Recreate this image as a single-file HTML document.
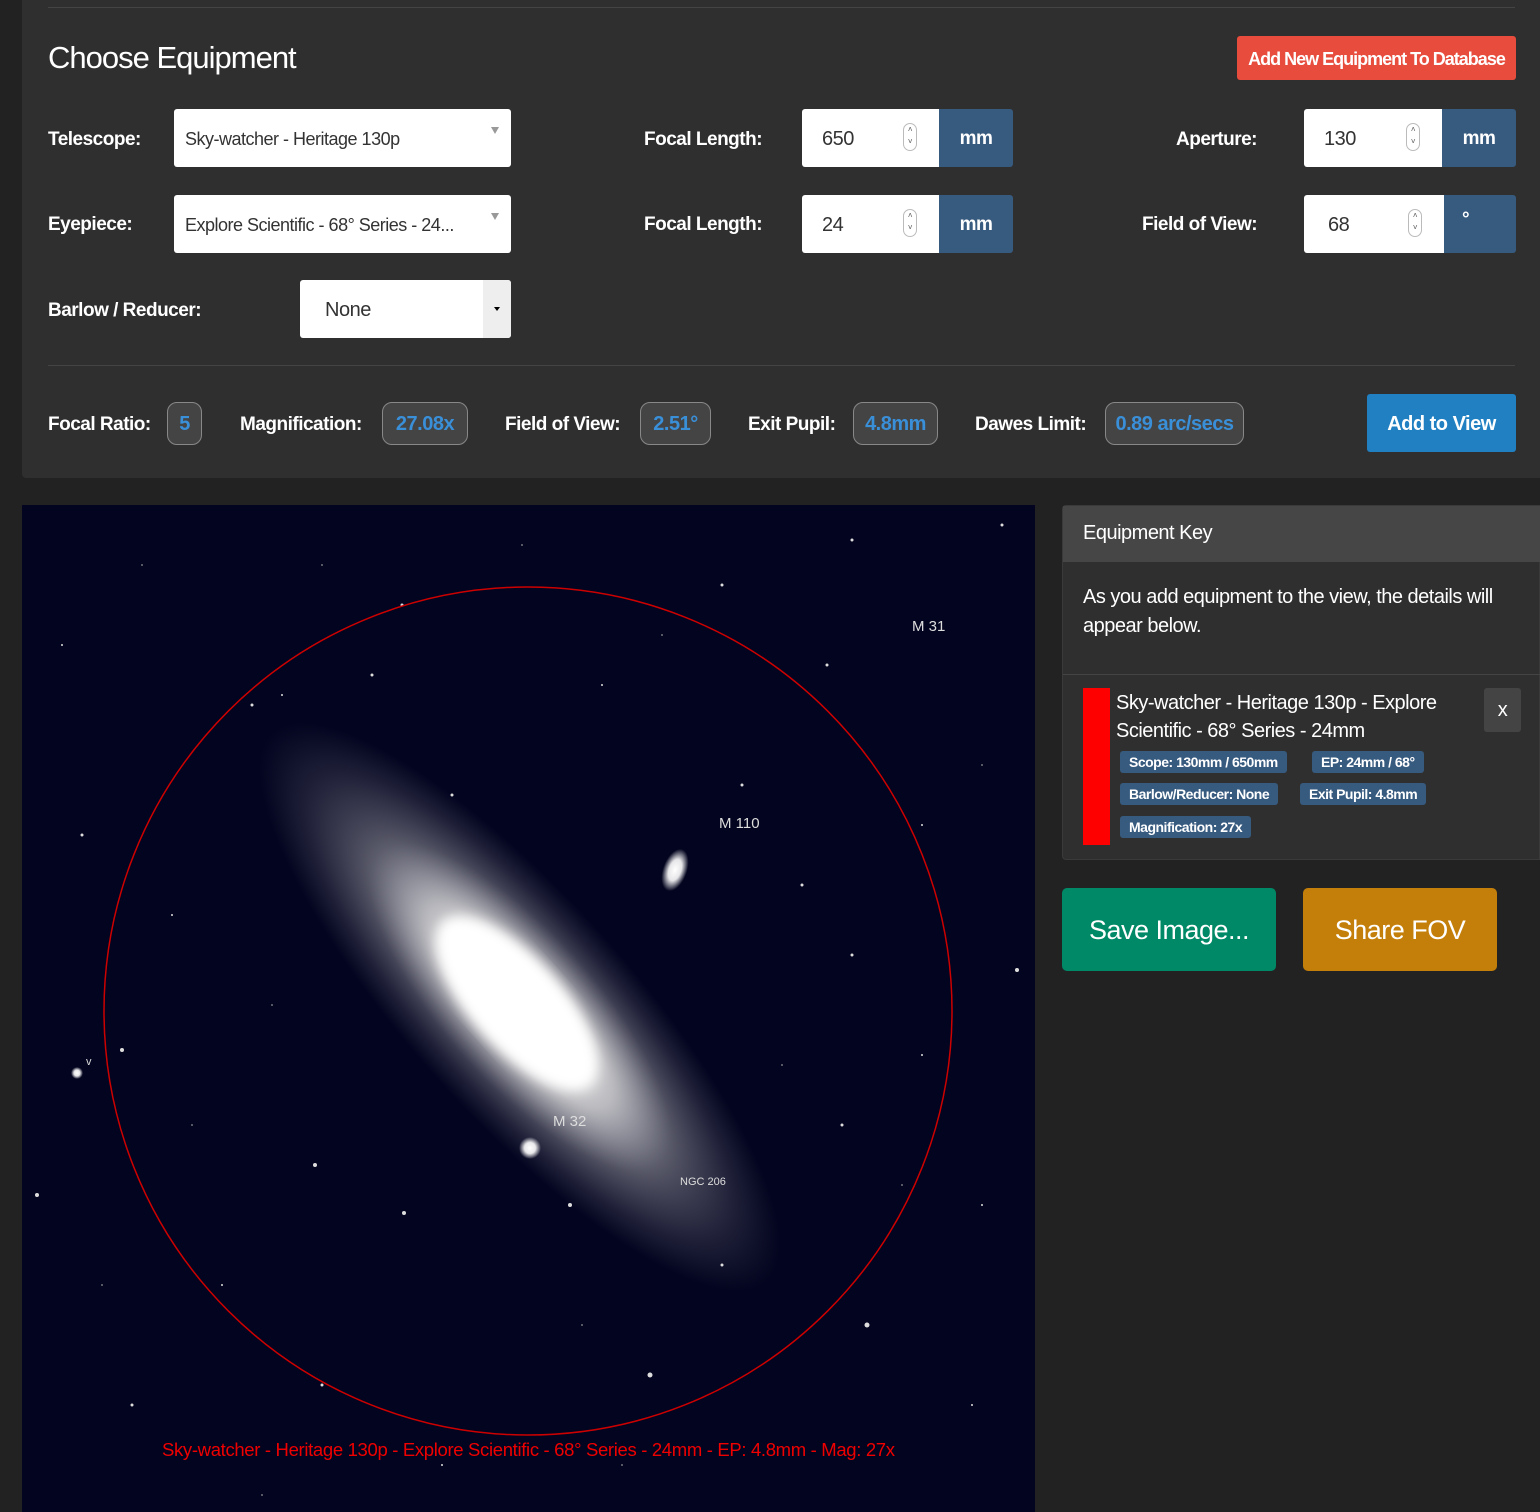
<!DOCTYPE html>
<html><head><meta charset="utf-8"><style>
*{box-sizing:border-box;margin:0;padding:0}
body{width:1540px;height:1512px;background:#222;font-family:"Liberation Sans",sans-serif;color:#fff;position:relative;overflow:hidden;letter-spacing:-0.5px}
.abs{position:absolute}
.panel{left:22px;top:0;width:1518px;height:478px;background:#2f2f2f;border-radius:0 0 0 4px}
.hr{height:1px;background:#444}
.lbl{font-weight:bold;font-size:19px;color:#fff}
.sel{background:#fff;border-radius:3px;color:#333;font-size:18px;padding-left:11px;line-height:60px;height:58px}
.arr{position:absolute;right:12px;top:18px;width:0;height:0;border-left:4px solid transparent;border-right:4px solid transparent;border-top:7px solid #999}
.num{background:#fff;border-radius:3px 0 0 3px;color:#333;font-size:20px;height:58px;line-height:60px;padding-left:20px}
.spin{position:absolute;right:22px;top:14px;width:14px;height:28px;border:1px solid #bbb;border-radius:7px;font-size:8px;line-height:12px;text-align:center;color:#555}
.unit{background:#375a7f;border-radius:0 3px 3px 0;height:58px;line-height:60px;font-weight:bold;font-size:19px;text-align:center}
.badge{border:1px solid #888;border-radius:10px;background:#444;color:#3a8fd9;font-weight:bold;font-size:20px;height:43px;line-height:43px;text-align:center}
.tag{background:#375a7f;border-radius:3px;font-weight:bold;font-size:14px;height:22px;line-height:22px;padding:0 9px;position:absolute}
</style></head><body>
<div class="abs panel"></div>
<div class="abs hr" style="left:48px;top:7px;width:1467px"></div>
<div class="abs" style="left:48px;top:40px;font-size:31px;letter-spacing:-1px">Choose Equipment</div>
<div class="abs" style="left:1237px;top:36px;width:279px;height:44px;background:#e74c3c;border-radius:3px;font-size:18px;font-weight:bold;text-align:center;line-height:46px;letter-spacing:-1px">Add New Equipment To Database</div>

<div class="abs lbl" style="left:48px;top:129px">Telescope:</div>
<div class="abs sel" style="left:174px;top:109px;width:337px">Sky-watcher - Heritage 130p<span class="arr"></span></div>
<div class="abs lbl" style="left:48px;top:214px">Eyepiece:</div>
<div class="abs sel" style="left:174px;top:195px;width:337px">Explore Scientific - 68° Series - 24...<span class="arr"></span></div>
<div class="abs lbl" style="left:48px;top:300px">Barlow / Reducer:</div>
<div class="abs sel" style="left:300px;top:280px;width:211px;padding-left:25px;font-size:20px">None<span style="position:absolute;right:0;top:0;width:28px;height:58px;background:#eee;border-radius:0 3px 3px 0"></span><span style="position:absolute;right:11px;top:27px;border-left:3px solid transparent;border-right:3px solid transparent;border-top:4px solid #000"></span></div>

<div class="abs lbl" style="left:644px;top:129px">Focal Length:</div>
<div class="abs num" style="left:802px;top:109px;width:137px">650<span class="spin">˄<br>˅</span></div>
<div class="abs unit" style="left:939px;top:109px;width:74px">mm</div>
<div class="abs lbl" style="left:644px;top:214px">Focal Length:</div>
<div class="abs num" style="left:802px;top:195px;width:137px">24<span class="spin">˄<br>˅</span></div>
<div class="abs unit" style="left:939px;top:195px;width:74px">mm</div>

<div class="abs lbl" style="left:1176px;top:129px">Aperture:</div>
<div class="abs num" style="left:1304px;top:109px;width:138px">130<span class="spin">˄<br>˅</span></div>
<div class="abs unit" style="left:1442px;top:109px;width:74px">mm</div>
<div class="abs lbl" style="left:1142px;top:214px">Field of View:</div>
<div class="abs num" style="left:1304px;top:195px;width:140px;padding-left:24px">68<span class="spin">˄<br>˅</span></div>
<div class="abs unit" style="left:1444px;top:195px;width:72px;text-align:left;padding-left:18px;line-height:50px">°</div>

<div class="abs hr" style="left:48px;top:365px;width:1467px"></div>
<div class="abs lbl" style="left:48px;top:414px">Focal Ratio:</div>
<div class="abs badge" style="left:167px;top:402px;width:35px">5</div>
<div class="abs lbl" style="left:240px;top:414px">Magnification:</div>
<div class="abs badge" style="left:382px;top:402px;width:86px">27.08x</div>
<div class="abs lbl" style="left:505px;top:414px">Field of View:</div>
<div class="abs badge" style="left:640px;top:402px;width:71px">2.51°</div>
<div class="abs lbl" style="left:748px;top:414px">Exit Pupil:</div>
<div class="abs badge" style="left:853px;top:402px;width:85px">4.8mm</div>
<div class="abs lbl" style="left:975px;top:414px">Dawes Limit:</div>
<div class="abs badge" style="left:1105px;top:402px;width:139px">0.89 arc/secs</div>
<div class="abs" style="left:1367px;top:394px;width:149px;height:58px;background:#2180c2;border-radius:3px;font-size:20px;font-weight:bold;text-align:center;line-height:60px">Add to View</div>

<svg class="abs" style="left:22px;top:505px;letter-spacing:0" width="1013" height="1007" viewBox="0 0 1013 1007">
<defs>
<radialGradient id="g1"><stop offset="0" stop-color="#fff"/><stop offset=".35" stop-color="#fff" stop-opacity=".95"/><stop offset=".6" stop-color="#ccc" stop-opacity=".55"/><stop offset="1" stop-color="#889" stop-opacity="0"/></radialGradient>
<radialGradient id="g2"><stop offset="0" stop-color="#fff"/><stop offset=".5" stop-color="#fff" stop-opacity=".9"/><stop offset="1" stop-color="#fff" stop-opacity="0"/></radialGradient>
<filter id="b"><feGaussianBlur stdDeviation="6"/></filter>
</defs>
<rect width="1013" height="1007" fill="#03041f"/>
<g transform="translate(498 502) rotate(48)">
<ellipse rx="370" ry="110" fill="url(#g1)" opacity=".7"/>
<ellipse rx="210" ry="75" fill="url(#g1)"/>
<ellipse cx="-5" rx="110" ry="45" fill="#fff" filter="url(#b)"/>
</g>
<ellipse cx="653" cy="365" rx="12" ry="22" transform="rotate(20 653 365)" fill="url(#g2)"/>
<circle cx="508" cy="643" r="11" fill="url(#g2)"/>
<circle cx="55" cy="568" r="6" fill="url(#g2)"/>
<g fill="#ddd">
<circle cx="60" cy="330" r="1.5"/><circle cx="230" cy="200" r="1.5"/><circle cx="430" cy="290" r="1.5"/><circle cx="580" cy="180" r="1"/><circle cx="780" cy="380" r="1.5"/><circle cx="820" cy="620" r="1.5"/><circle cx="830" cy="450" r="1.5"/><circle cx="15" cy="690" r="2"/><circle cx="110" cy="900" r="1.5"/><circle cx="548" cy="700" r="2"/><circle cx="382" cy="708" r="2"/><circle cx="293" cy="660" r="2"/><circle cx="628" cy="870" r="2.5"/><circle cx="845" cy="820" r="2.5"/><circle cx="805" cy="160" r="1.5"/><circle cx="830" cy="35" r="1.5"/><circle cx="350" cy="170" r="1.5"/><circle cx="700" cy="80" r="1.5"/><circle cx="980" cy="20" r="1.5"/><circle cx="995" cy="465" r="2"/><circle cx="720" cy="280" r="1.5"/><circle cx="100" cy="545" r="2"/><circle cx="300" cy="880" r="1.5"/><circle cx="900" cy="550" r="1"/><circle cx="150" cy="410" r="1"/><circle cx="380" cy="100" r="1.5"/><circle cx="260" cy="190" r="1"/><circle cx="900" cy="320" r="1"/><circle cx="960" cy="700" r="1"/><circle cx="200" cy="780" r="1"/><circle cx="700" cy="760" r="1.5"/><circle cx="40" cy="140" r="1"/><circle cx="950" cy="900" r="1"/><circle cx="420" cy="960" r="1"/></g>
<g fill="#bbb" opacity=".6">
<circle cx="120" cy="60" r="1"/><circle cx="500" cy="40" r="1"/><circle cx="640" cy="130" r="1"/><circle cx="900" cy="120" r="1"/><circle cx="170" cy="620" r="1"/><circle cx="250" cy="500" r="1"/><circle cx="760" cy="560" r="1"/><circle cx="880" cy="680" r="1"/><circle cx="560" cy="820" r="1"/><circle cx="80" cy="780" r="1"/><circle cx="960" cy="260" r="1"/><circle cx="300" cy="60" r="1"/><circle cx="600" cy="960" r="1"/><circle cx="240" cy="990" r="1"/></g>
<circle cx="506" cy="506" r="424" fill="none" stroke="#c00" stroke-width="1.5"/>
<g fill="#ddd" font-family="Liberation Sans,sans-serif" font-size="15">
<text x="890" y="126">M 31</text><text x="697" y="323">M 110</text><text x="531" y="621">M 32</text><text x="658" y="680" font-size="11">NGC 206</text><text x="64" y="560" font-size="11">v</text></g>
<text x="140" y="951" fill="#e00" font-family="Liberation Sans,sans-serif" font-size="18.5" textLength="733">Sky-watcher - Heritage 130p - Explore Scientific - 68° Series - 24mm - EP: 4.8mm - Mag: 27x</text>
</svg>

<div class="abs" style="left:1062px;top:505px;width:478px;height:355px;background:#2f2f2f;border:1px solid #3a3a3a;border-radius:4px 0 0 4px"></div>
<div class="abs" style="left:1063px;top:506px;width:477px;height:56px;background:#464646"></div>
<div class="abs" style="left:1083px;top:522px;font-size:20px">Equipment Key</div>
<div class="abs" style="left:1083px;top:583px;width:440px;font-size:20px;line-height:29px">As you add equipment to the view, the details will appear below.</div>
<div class="abs hr" style="left:1063px;top:674px;width:477px"></div>
<div class="abs" style="left:1083px;top:688px;width:27px;height:157px;background:#f00"></div>
<div class="abs" style="left:1116px;top:689px;width:360px;font-size:20px;line-height:28px">Sky-watcher - Heritage 130p - Explore Scientific - 68° Series - 24mm</div>
<div class="abs" style="left:1484px;top:688px;width:37px;height:44px;background:#444;border-radius:3px;text-align:center;line-height:44px;font-size:20px">x</div>
<div class="tag" style="left:1120px;top:751px">Scope: 130mm / 650mm</div>
<div class="tag" style="left:1312px;top:751px">EP: 24mm / 68°</div>
<div class="tag" style="left:1120px;top:783px">Barlow/Reducer: None</div>
<div class="tag" style="left:1300px;top:783px">Exit Pupil: 4.8mm</div>
<div class="tag" style="left:1120px;top:816px">Magnification: 27x</div>
<div class="abs" style="left:1062px;top:888px;width:214px;height:83px;background:#008966;border-radius:5px;font-size:27px;text-align:center;line-height:85px">Save Image...</div>
<div class="abs" style="left:1303px;top:888px;width:194px;height:83px;background:#c47f0a;border-radius:5px;font-size:27px;text-align:center;line-height:85px">Share FOV</div>
</body></html>
